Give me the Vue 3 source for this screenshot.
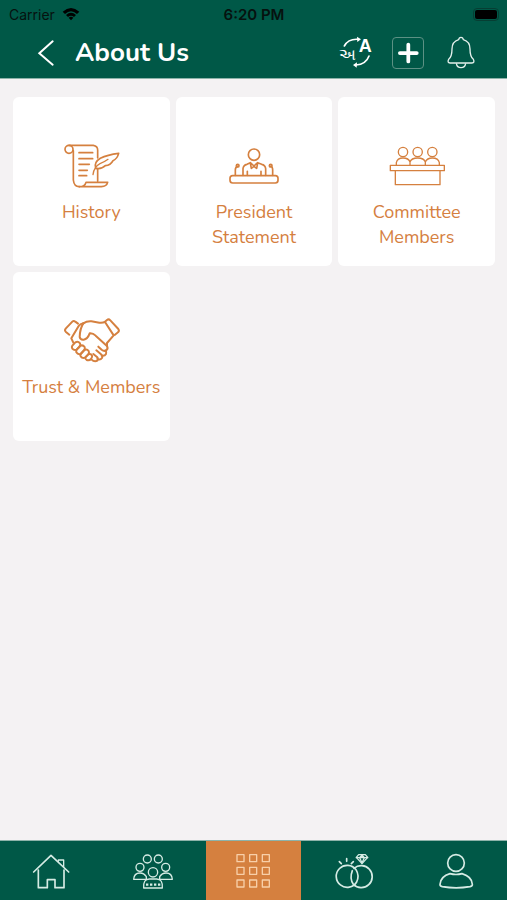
<template>
  <div class="screen">
    <header class="header">
      <div class="status">
        <span class="carrier">
          Carrier
          <svg class="wifi" viewBox="0 0 54 42" aria-hidden="true">
            <path d="M2 14Q27-8 52 14L45 21Q27 5 9 21Z" />
            <path d="M12 24Q27 11 42 24L36 30Q27 22 18 30Z" />
            <path d="M20 32Q27 26 34 32L27 40Z" />
          </svg>
        </span>
        <span class="clock">6:20 PM</span>
        <span class="battery"><span class="battery-body"></span></span>
      </div>

      <div class="toolbar">
        <button class="back" type="button" aria-label="Back">
          <svg viewBox="0 0 48 84" fill="none" stroke="#fff" stroke-width="6" stroke-linecap="round">
            <path d="M44 7L4 43L44 77" />
          </svg>
        </button>
        <h1 class="title">About Us</h1>
        <button class="tool" type="button" aria-label="Change language">
          <svg viewBox="255 111 96 96">
            <g fill="none" stroke="#fff" stroke-width="5" stroke-linecap="round">
              <path d="M271 138Q283 116 312 118" />
              <path d="M345 168Q336 193 306 195" />
            </g>
            <path d="M309 110L321 118L310 126ZM309 187L297 195L308 203Z" fill="#fff" />
            <text class="glyph-gu" x="255" y="181">અ</text>
            <text class="glyph-latin" x="314" y="157">A</text>
          </svg>
        </button>
        <button class="tool boxed" type="button" aria-label="Add">
          <svg viewBox="0 0 96 96" stroke="#fff" stroke-width="12" stroke-linecap="round">
            <path d="M22 48H76M49 21V75" />
          </svg>
        </button>
        <button class="tool" type="button" aria-label="Notifications">
          <svg viewBox="573 111 96 96" fill="none" stroke="#e3f0ec" stroke-width="4" stroke-linejoin="round">
            <path d="M621 112Q615 112 614 119Q594 125 594 147Q594 170 584 178Q579 189 588 189H654Q663 189 658 178Q648 170 648 147Q648 125 628 119Q627 112 621 112Z" />
            <path d="M607 190Q609 203 621 203Q633 203 635 190" />
          </svg>
        </button>
      </div>
    </header>

    <main class="grid">
      <a v-for="card in cards" :key="card.id" class="card" href="#">
        <svg v-if="card.id === 'history'" class="card-icon" viewBox="15 -3 168 168">
          <circle cx="33" cy="34" r="12" />
          <path d="M33 22H106Q119 24 119 36V60M119 92V130M46 38V126Q48 146 64 146" />
          <path d="M64 146H130Q146 145 149 133H84Q81 146 64 146" />
          <path d="M63 44H104M63 62H104M63 79H94M63 97H88M63 113H86" />
          <path d="M182 46Q148 50 127 61Q107 73 113 91Q131 94 142 83Q158 82 165 68Q178 62 182 46Z" />
          <path d="M105 110Q108 86 126 77Q138 73 150 64" stroke-width="4" />
        </svg>

        <svg v-else-if="card.id === 'president'" class="card-icon" viewBox="63 21 168 168">
          <rect x="75" y="137" width="144" height="22" rx="8" />
          <circle cx="147" cy="74" r="17" />
          <path d="M114 136V116Q115 105 126 103L136 98L147 108L158 98L170 103Q181 105 182 116V136M136 99L139 115L147 109L155 115L158 99M127 136V124M168 136V124" />
          <path d="M91 136V119Q91 111 98 109M203 136V119Q203 111 197 109" />
          <circle cx="98" cy="107" r="4" />
          <circle cx="197" cy="107" r="4" />
        </svg>

        <svg v-else-if="card.id === 'committee'" class="card-icon thin" viewBox="69 21 168 168">
          <rect x="73" y="106" width="162" height="16" />
          <path d="M88 123V164H222V123" />
          <circle cx="111" cy="66" r="14" />
          <circle cx="155" cy="66" r="14" />
          <circle cx="199" cy="66" r="14" />
          <path d="M91 105V98Q94 84 111 84Q128 84 132 96Q136 84 155 84Q174 84 178 96Q183 84 199 84Q217 84 220 98V105M132 96V105M178 96V105" />
        </svg>

        <svg v-else class="card-icon bold" viewBox="15 0 168 168">
          <path d="M34 68L23 59Q19 55 23 50L43 29Q47 25 52 29L60 35M140 30L147 24Q152 20 157 25L181 51Q185 56 180 61L170 69" />
          <path d="M40 79L62 42Q66 36 76 34M40 79L46 92" />
          <path d="M76 34Q86 27 100 28L124 32Q134 33 141 30L167 70L147 93V101" />
          <path d="M76 34Q66 48 65 75Q67 84 77 83Q89 81 95 64Q105 63 113 71L146 101Q152 109 145 115Q138 119 131 113L121 104" />
          <path d="M43 101L52 91Q60 86 66 94Q69 99 64 105L56 113Q48 116 43 110Q40 105 43 101Z" />
          <path d="M56 113L66 102Q74 97 80 105Q82 110 78 115L68 126Q59 128 55 121Q54 117 56 113Z" />
          <path d="M68 126L79 114Q87 110 92 117Q95 123 90 128L81 137Q73 140 68 133Q66 129 68 126Z" />
          <path d="M82 136L91 127Q99 124 102 131Q104 136 99 141Q94 147 86 144Q81 141 82 136Z" />
          <path d="M100 142Q109 151 118 146Q122 141 117 135L106 126M118 141Q127 145 132 138Q135 132 129 127L115 115M131 131Q140 133 144 126Q146 121 143 115" />
        </svg>
        <span class="card-label">{{ card.label }}</span>
      </a>
    </main>

    <nav class="tabs">
      <a class="tab" href="#" aria-label="Home">
        <svg viewBox="93 60 120 120" stroke-width="5">
          <path d="M101 123L153 73L206 123M115 117V170H142V146H165V170H192V117" />
          <path d="M175 91V87H191V107" stroke-width="4" />
        </svg>
      </a>
      <a class="tab" href="#" aria-label="Community">
        <svg viewBox="396 60 120 120" stroke-width="4">
          <circle cx="442" cy="84" r="12" />
          <circle cx="475" cy="84" r="12" />
          <circle cx="420" cy="109" r="12" />
          <circle cx="497" cy="109" r="12" />
          <circle cx="459" cy="124" r="14" />
          <path d="M439 145H401Q402 126 420 126Q432 126 439 137ZM479 145H517Q516 126 498 126Q486 126 479 137Z" />
          <path d="M431 171Q429 144 448 144H470Q489 144 487 171Z" />
          <path class="dots" d="M438 161H481" />
        </svg>
      </a>
      <a class="tab active" href="#" aria-label="Menu" aria-current="page">
        <svg viewBox="114 63 120 120" stroke-width="4">
          <template v-for="y in [74, 112, 150]" :key="y">
            <rect v-for="x in [126, 164, 202]" :key="x" :x="x" :y="y" width="21" height="21" />
          </template>
        </svg>
      </a>
      <a class="tab" href="#" aria-label="Matrimony">
        <svg viewBox="74 60 120 120" stroke-width="5">
          <path d="M137 116A33 33 0 1 0 139 153Q148 134 137 116" />
          <path d="M131 112A33 33 0 1 1 129 160Q117 143 126 119" />
          <path d="M87 92L93 98M109 83V91M129 92L123 98" />
          <path d="M138 79L145 71H165L172 79L155 98Z" stroke-width="4" />
          <path d="M138 80H172M148 80L155 96L162 80L155 72Z" stroke-width="4" />
        </svg>
      </a>
      <a class="tab" href="#" aria-label="Profile">
        <svg viewBox="378 60 120 120" stroke-width="5">
          <circle cx="438" cy="96" r="25" />
          <path d="M420 128Q438 133 456 128Q486 137 487 160Q488 165 480 167Q438 174 397 167Q389 165 390 160Q392 136 420 128Z" />
        </svg>
      </a>
    </nav>
  </div>
</template>

<script setup>
const cards = [
  { id: 'history', label: 'History' },
  { id: 'president', label: 'President Statement' },
  { id: 'committee', label: 'Committee Members' },
  { id: 'trust', label: 'Trust & Members' },
]
</script>

<style>
body {
  margin: 0;
  background: #f4f2f3;
}
</style>

<style scoped>
.screen {
  display: flex; flex-direction: column;
  min-height: 100vh;
  font-family: Nunito, 'Open Sans', 'Noto Sans', sans-serif;
}

button {
  padding: 0; border: 0;
  background: none; cursor: pointer;
}

svg { display: block; overflow: visible; }

/* header */
.header { background: #005847; border-bottom: 1px solid #8db3aa; }

.status {
  display: grid; grid-template-columns: 1fr auto 1fr; align-items: center;
  height: 28px; padding: 0 8px 0 9px;
  font-family: Inter, sans-serif; font-size: 14px;
  color: #06120f;
}
.carrier { display: flex; align-items: center; gap: 7px; }
.wifi { width: 18px; height: 14px; fill: #000; }
.clock { font-size: 15px; font-weight: 600; }
.battery {
  justify-self: end;
  padding: 1px; border: 1px solid #063e33; border-radius: 4px;
}
.battery-body {
  display: block; width: 22px; height: 9px;
  border-radius: 2px; background: #000;
}

.toolbar {
  display: flex; align-items: center; gap: 21px;
  height: 50px; padding: 0 30px 0 38px;
}
.back svg { width: 16px; height: 28px; }
.title {
  flex: 1; margin: 0;
  font-size: 26px; line-height: 32px; font-weight: 700;
  color: #fff;
}
.tool { width: 32px; height: 32px; }
.tool svg { width: 32px; height: 32px; }
.boxed { box-sizing: border-box; border: 1px solid #5c9184; border-radius: 4px; }
.boxed svg { width: 30px; height: 30px; }
.glyph-gu { font-size: 48px; fill: #fff; }
.glyph-latin { font-size: 54px; font-weight: 800; fill: #fff; }

/* cards */
.grid {
  flex: 1;
  display: grid; grid-template-columns: repeat(3, 1fr);
  align-content: start; gap: 6px;
  padding: 18px 12px 18px 13px;
}
.card {
  box-sizing: border-box;
  display: flex; flex-direction: column; align-items: center; gap: 7px;
  min-height: 169px; padding: 40px 4px 0;
  border-radius: 6px; background: #fff;
  color: #d5803f; text-decoration: none;
}
.card-icon {
  width: 56px; height: 56px;
  fill: none; stroke: #d5803f; stroke-width: 5;
  stroke-linecap: round; stroke-linejoin: round;
}
.card-icon.thin { stroke-width: 4; }
.card-icon.bold { stroke-width: 6; }
.card-label {
  max-width: 144px;
  font-size: 18px; line-height: 25px; text-align: center;
}

/* bottom tabs */
.tabs {
  display: grid; grid-template-columns: repeat(5, 1fr);
  height: 59px;
  border-top: 1px solid #8db3aa; background: #005847;
}
.tab { display: flex; align-items: center; justify-content: center; }
.tab svg {
  width: 40px; height: 40px;
  fill: none; stroke: #d5ebe4; stroke-linecap: round; stroke-linejoin: round;
}
.tab .dots { stroke-width: 7; stroke-linecap: butt; stroke-dasharray: 7 5; }
.tab.active { margin: 0 3px; background: #d5803f; }
.tab.active svg { stroke: #f8cfa9; }
</style>
